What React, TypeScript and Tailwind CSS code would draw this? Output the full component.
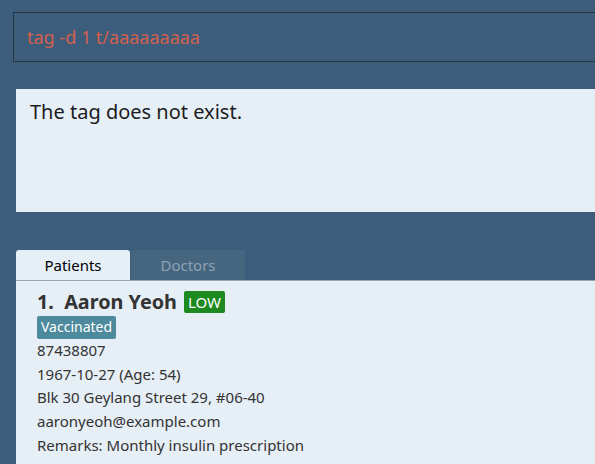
import React from "react";

export default function App() {
  const font = { fontFamily: '"Noto Sans", "Open Sans", sans-serif' };
  return (
    <div className="w-[595px] h-[464px] overflow-hidden bg-[#3c5d7c] flex flex-col" style={font}>
      <div className="pt-[12px] pl-[13px]">
        <div className="w-[600px] h-[50px] border border-[#263544] flex items-center pl-[13px]">
          <span className="text-[18px] text-[#d4604c] leading-none pb-[1px]">tag -d 1 t/aaaaaaaaa</span>
        </div>
      </div>
      <div className="pt-[27px] pl-[16px]">
        <div className="w-[600px] h-[123px] bg-[#e6eef6] pl-[14px] pt-[10px]">
          <span className="text-[20px] text-[#1c1c1c] leading-[26px]">The tag does not exist.</span>
        </div>
      </div>
      <div className="pt-[38px] pl-[16px] flex flex-col">
        <div className="flex gap-[1px] h-[31px] border-b border-[#9aa5b1] w-[600px]">
          <div className="w-[114px] h-[30px] bg-[#e6eef6] rounded-t-[3px] flex items-center justify-center text-[15px] text-black">Patients</div>
          <div className="w-[114px] h-[30px] bg-[#46667f] rounded-t-[3px] flex items-center justify-center text-[15px] text-[#8ea2b5]">Doctors</div>
        </div>
        <div className="w-[600px] h-[200px] bg-[#e6eef6] pl-[21px] pt-[9px] text-[#333333]">
          <div className="flex items-center gap-[7px] h-[24px]">
            <span className="text-[19.8px] font-bold leading-none">1.&nbsp;&nbsp;Aaron Yeoh</span>
            <span className="bg-[#1d8a1f] text-white text-[15px] leading-none px-[4px] py-[3.5px] rounded-[2px]">LOW</span>
          </div>
          <div className="mt-[2px] flex">
            <span className="bg-[#4d8a9d] text-white text-[14px] leading-none px-[4px] py-[4px] pb-[5px] rounded-[2px]">Vaccinated</span>
          </div>
          <div className="text-[15px] leading-[23.7px]">
            <div>87438807</div>
            <div>1967-10-27 (Age: 54)</div>
            <div>Blk 30 Geylang Street 29, #06-40</div>
            <div>aaronyeoh@example.com</div>
            <div>Remarks: Monthly insulin prescription</div>
          </div>
        </div>
      </div>
    </div>
  );
}
